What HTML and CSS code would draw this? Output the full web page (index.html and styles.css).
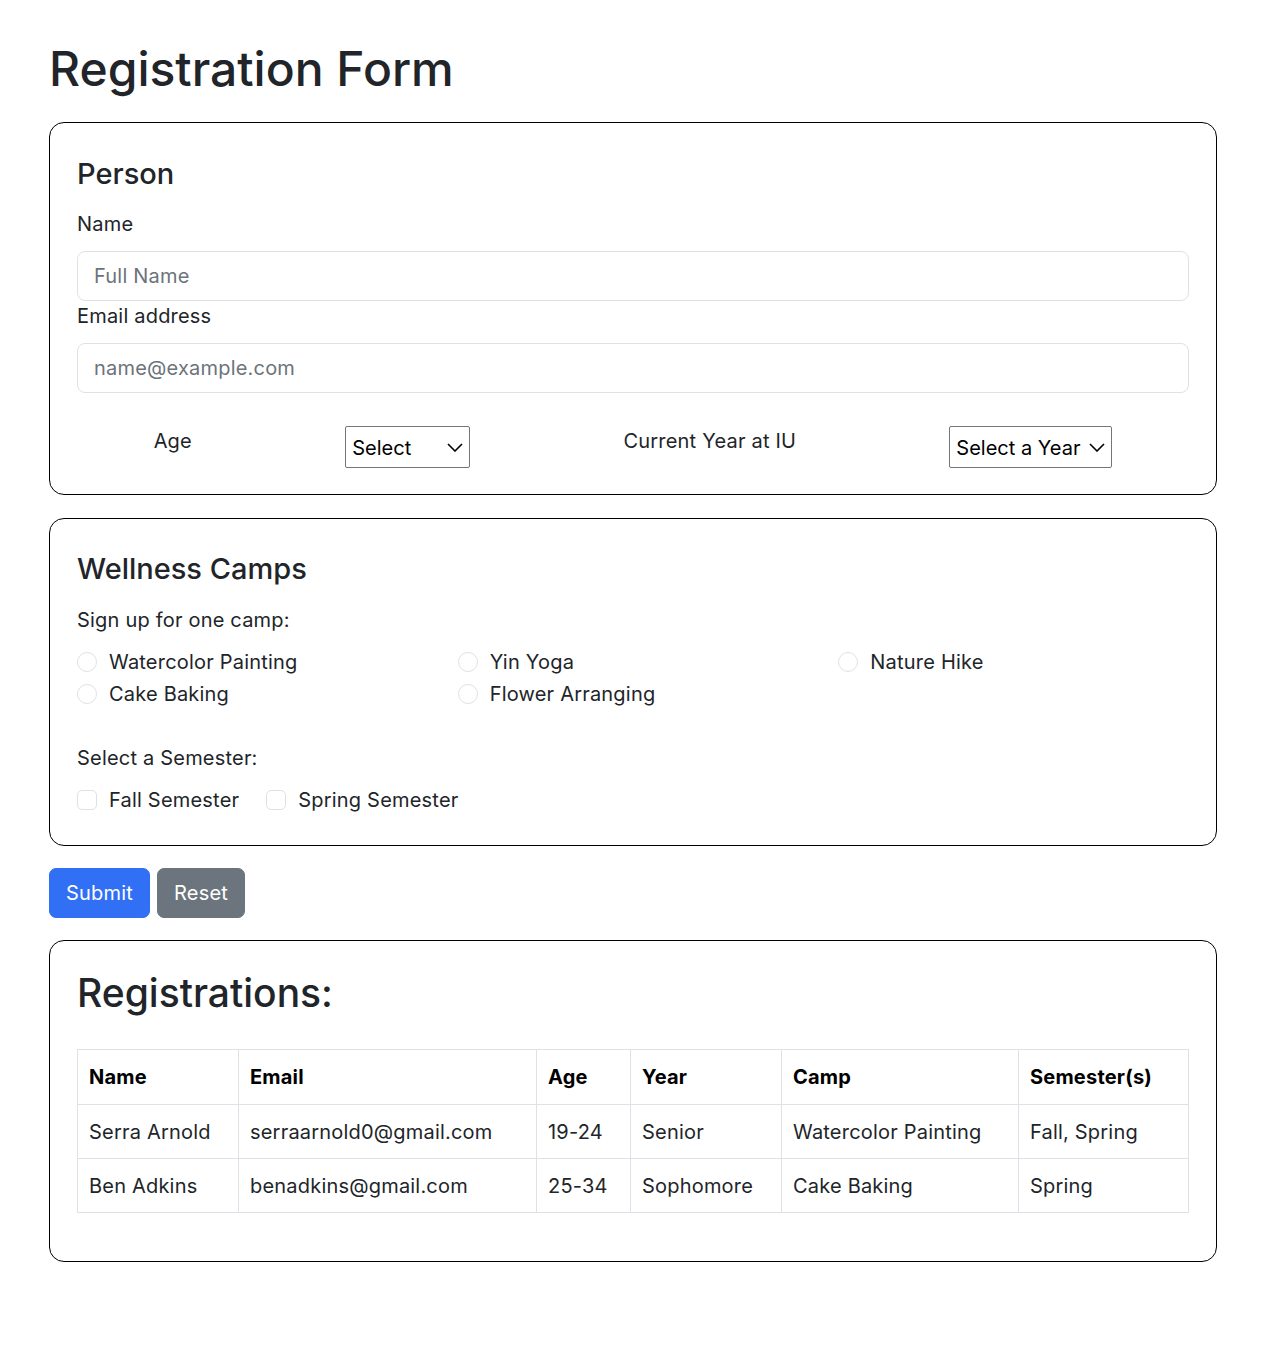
FILE: index.html
```html
<!DOCTYPE html>
<html lang="en">
<head>
<meta charset="utf-8">
<title>Registration Form</title>
<link rel="stylesheet" href="styles.css">
</head>
<body>
<main class="page">
  <h1 class="page-title">Registration Form</h1>
  <form class="reg-form">
    <section class="card card-person">
      <h4 class="card-title">Person</h4>
      <label class="field-label" for="name">Name</label>
      <input class="text-input" id="name" type="text" placeholder="Full Name">
      <label class="field-label" for="email">Email address</label>
      <input class="text-input" id="email" type="email" placeholder="name@example.com">
      <div class="select-row">
        <label class="inline-label" for="age">Age</label>
        <span class="select-wrap select-age">
          <select id="age" class="select">
            <option>Select</option>
            <option>18 or under</option>
            <option>19-24</option>
            <option>25-34</option>
            <option>35+</option>
          </select>
          <svg class="chev" viewBox="0 0 16 9" width="16" height="9" aria-hidden="true"><path d="M1 1l7 7 7-7"/></svg>
        </span>
        <label class="inline-label" for="year">Current Year at IU</label>
        <span class="select-wrap select-year">
          <select id="year" class="select">
            <option>Select a Year</option>
            <option>Freshman</option>
            <option>Sophomore</option>
            <option>Junior</option>
            <option>Senior</option>
          </select>
          <svg class="chev" viewBox="0 0 16 9" width="16" height="9" aria-hidden="true"><path d="M1 1l7 7 7-7"/></svg>
        </span>
      </div>
    </section>

    <section class="card card-camps">
      <h4 class="card-title">Wellness Camps</h4>
      <p class="field-label">Sign up for one camp:</p>
      <div class="camp-grid">
        <label class="check"><input class="radio" type="radio" name="camp"><span>Watercolor Painting</span></label>
        <label class="check"><input class="radio" type="radio" name="camp"><span>Yin Yoga</span></label>
        <label class="check"><input class="radio" type="radio" name="camp"><span>Nature Hike</span></label>
        <label class="check"><input class="radio" type="radio" name="camp"><span>Cake Baking</span></label>
        <label class="check"><input class="radio" type="radio" name="camp"><span>Flower Arranging</span></label>
      </div>
      <p class="field-label semester-label">Select a Semester:</p>
      <div class="semester-row">
        <label class="check"><input class="checkbox" type="checkbox"><span>Fall Semester</span></label>
        <label class="check"><input class="checkbox" type="checkbox"><span>Spring Semester</span></label>
      </div>
    </section>

    <div class="actions">
      <button type="button" class="btn btn-primary">Submit</button>
      <button type="reset" class="btn btn-secondary">Reset</button>
    </div>

    <section class="card card-table">
      <h2 class="table-title">Registrations:</h2>
      <table class="reg-table">
        <thead>
          <tr>
            <th class="c-name">Name</th>
            <th class="c-email">Email</th>
            <th class="c-age">Age</th>
            <th class="c-year">Year</th>
            <th class="c-camp">Camp</th>
            <th class="c-sem">Semester(s)</th>
          </tr>
        </thead>
        <tbody>
          <tr>
            <td>Serra Arnold</td>
            <td>serraarnold0@gmail.com</td>
            <td>19-24</td>
            <td>Senior</td>
            <td>Watercolor Painting</td>
            <td>Fall, Spring</td>
          </tr>
          <tr>
            <td>Ben Adkins</td>
            <td>benadkins@gmail.com</td>
            <td>25-34</td>
            <td>Sophomore</td>
            <td>Cake Baking</td>
            <td>Spring</td>
          </tr>
        </tbody>
      </table>
    </section>
  </form>
</main>
</body>
</html>
```
FILE: styles.css
```css
* { box-sizing: border-box; }

html, body { margin: 0; padding: 0; }

body {
  font-family: Inter, "Liberation Sans", Arial, sans-serif;
  font-size: 20px;
  line-height: 1.5;
  letter-spacing: 0.2px;
  color: #212529;
  background: #fff;
}

.page {
  width: 1168px;
  margin-left: 49px;
  padding-bottom: 80px;
}

.page-title {
  font-size: 48px;
  font-weight: 500;
  line-height: 56px;
  letter-spacing: 0;
  margin: 41px 0 25px;
}

.reg-form {
  display: flex;
  flex-direction: column;
  gap: 22px;
}

.card {
  border: 1px solid #000;
  border-radius: 15px;
  padding: 28px 27px 26px;
}

.card-person { margin-bottom: 1px; }
.card-camps { padding-bottom: 30px; }

.card-title {
  font-size: 29px;
  font-weight: 500;
  line-height: 36px;
  letter-spacing: 0;
  margin: 5px 0 17px;
}

.card-camps .card-title { margin: 4px 0 18px; }

.field-label {
  display: block;
  margin: 0 0 12px;
  line-height: 30px;
}

.text-input {
  display: block;
  width: 100%;
  height: 50px;
  padding: 0 16px;
  font: inherit;
  letter-spacing: inherit;
  color: #212529;
  border: 1px solid #dee2e6;
  border-radius: 8px;
  background: #fff;
}

.text-input::placeholder { color: #6c737a; }

.select-row {
  display: flex;
  justify-content: space-around;
  align-items: flex-start;
  margin-top: 33px;
}

.inline-label { line-height: 30px; }

.select-wrap {
  position: relative;
  display: block;
  height: 42px;
}

.select-age { width: 125px; }
.select-year { width: 163px; }

.select {
  -webkit-appearance: none;
  appearance: none;
  width: 100%;
  height: 42px;
  margin: 0;
  padding: 2px 28px 0 6px;
  font: inherit;
  letter-spacing: 0;
  color: #000;
  background: #fff;
  border: 1px solid #767676;
  border-radius: 2px;
}

.chev {
  position: absolute;
  right: 7px;
  top: 17px;
  fill: none;
  stroke: #000;
  stroke-width: 1.6;
  pointer-events: none;
}

.camp-grid {
  display: grid;
  grid-template-columns: repeat(3, 1fr);
  column-gap: 30px;
  row-gap: 2px;
}

.check {
  display: flex;
  align-items: center;
  gap: 12px;
  line-height: 30px;
}

.radio, .checkbox {
  -webkit-appearance: none;
  appearance: none;
  margin: 0;
  width: 20px;
  height: 20px;
  border: 1px solid #dee2e6;
  background: #fff;
  flex: none;
}

.radio { border-radius: 50%; }
.checkbox { border-radius: 5px; }

.semester-label { margin-top: 34px; }

.semester-row {
  display: flex;
  column-gap: 27px;
}

.actions {
  display: flex;
  gap: 7px;
}

.btn {
  font: inherit;
  letter-spacing: inherit;
  line-height: 30px;
  padding: 9px 16px;
  color: #fff;
  border: 1px solid transparent;
  border-radius: 7px;
}

.btn-primary { background: #3170f5; border-color: #3170f5; }
.btn-secondary { background: #6c757d; border-color: #6c757d; }

.card-table { padding-bottom: 28px; }

.table-title {
  font-size: 39px;
  font-weight: 500;
  line-height: 48px;
  letter-spacing: 0;
  margin: 0 0 32px;
}

.reg-table {
  width: 100%;
  border-collapse: collapse;
  margin-bottom: 20px;
}

.reg-table th, .reg-table td {
  border: 1px solid #dee2e6;
  text-align: left;
  vertical-align: middle;
  line-height: 30px;
}

.reg-table th {
  font-weight: 700;
  color: #000;
  padding: 12px 11px;
}

.reg-table td { padding: 11.5px 11px; }

.c-name { width: 161px; }
.c-email { width: 298px; }
.c-age { width: 94px; }
.c-year { width: 151px; }
.c-camp { width: 237px; }
.c-sem { width: 170px; }
```
